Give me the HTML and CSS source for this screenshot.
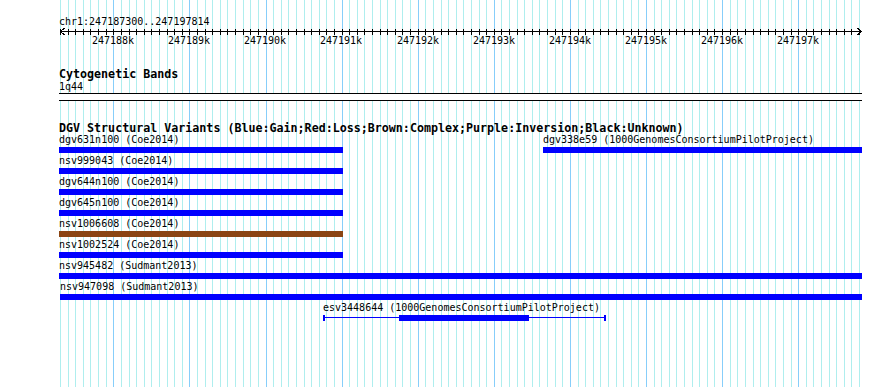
FILE: index.html
```html
<!DOCTYPE html>
<html>
<head>
<meta charset="utf-8">
<title>GBrowse - chr1:247187300..247197814</title>
<link rel="stylesheet" href="styles.css">
</head>
<body>
<div class="canvas">
  <svg class="grid" width="801" height="387" shape-rendering="crispEdges">
    <defs>
      <g id="kb">
        <rect class="grid-major" x="0" width="1" height="387"/>
        <rect class="grid-minor" x="7.61" width="1" height="387"/>
        <rect class="grid-minor" x="15.22" width="1" height="387"/>
        <rect class="grid-minor" x="22.83" width="1" height="387"/>
        <rect class="grid-minor" x="30.44" width="1" height="387"/>
        <rect class="grid-minor" x="38.05" width="1" height="387"/>
        <rect class="grid-minor" x="45.66" width="1" height="387"/>
        <rect class="grid-minor" x="53.27" width="1" height="387"/>
        <rect class="grid-minor" x="60.88" width="1" height="387"/>
        <rect class="grid-minor" x="68.49" width="1" height="387"/>
      </g>
    </defs>
    <use href="#kb" x="-22.8"/>
    <use href="#kb" x="53.3"/>
    <use href="#kb" x="129.4"/>
    <use href="#kb" x="205.5"/>
    <use href="#kb" x="281.6"/>
    <use href="#kb" x="357.7"/>
    <use href="#kb" x="433.8"/>
    <use href="#kb" x="509.9"/>
    <use href="#kb" x="586"/>
    <use href="#kb" x="662.1"/>
    <use href="#kb" x="738.2"/>
  </svg>

  <div class="content">
    <div class="locus">chr1:247187300..247197814</div>

    <div class="ruler">
      <svg class="ruler-art" width="805" height="10" shape-rendering="crispEdges">
        <defs>
          <g id="ticks">
            <rect x="0" y="1" width="1" height="6"/>
            <rect x="7.61" y="1" width="1" height="6"/>
            <rect x="15.22" y="1" width="1" height="6"/>
            <rect x="22.83" y="1" width="1" height="6"/>
            <rect x="30.44" y="1" width="1" height="6"/>
            <rect x="38.05" y="1" width="1" height="6"/>
            <rect x="45.66" y="1" width="1" height="6"/>
            <rect x="53.27" y="1" width="1" height="6"/>
            <rect x="60.88" y="1" width="1" height="6"/>
            <rect x="68.49" y="1" width="1" height="6"/>
          </g>
          <clipPath id="ruler-clip"><rect x="1" y="0" width="801" height="10"/></clipPath>
        </defs>
        <rect class="ink" x="1" y="3" width="802" height="1"/>
        <g class="ink" clip-path="url(#ruler-clip)">
          <use href="#ticks" x="-21.8"/>
          <use href="#ticks" x="54.3"/>
          <use href="#ticks" x="130.4"/>
          <use href="#ticks" x="206.5"/>
          <use href="#ticks" x="282.6"/>
          <use href="#ticks" x="358.7"/>
          <use href="#ticks" x="434.8"/>
          <use href="#ticks" x="510.9"/>
          <use href="#ticks" x="587"/>
          <use href="#ticks" x="663.1"/>
          <use href="#ticks" x="739.2"/>
        </g>
        <path class="arrow" d="M5.5 0 L1.5 3.5 L5.5 7"/>
        <path class="arrow" d="M798.5 0 L802.5 3.5 L798.5 7"/>
      </svg>
      <span class="tick-label" style="left:33px">247188k</span>
      <span class="tick-label" style="left:109px">247189k</span>
      <span class="tick-label" style="left:185px">247190k</span>
      <span class="tick-label" style="left:261px">247191k</span>
      <span class="tick-label" style="left:338px">247192k</span>
      <span class="tick-label" style="left:414px">247193k</span>
      <span class="tick-label" style="left:490px">247194k</span>
      <span class="tick-label" style="left:566px">247195k</span>
      <span class="tick-label" style="left:642px">247196k</span>
      <span class="tick-label" style="left:718px">247197k</span>
    </div>

    <section class="track">
      <div class="track-title">Cytogenetic Bands</div>
      <div class="band-label">1q44</div>
      <div class="band"></div>
    </section>

    <section class="track track-dgv">
      <div class="track-title">DGV Structural Variants (Blue:Gain;Red:Loss;Brown:Complex;Purple:Inversion;Black:Unknown)</div>

      <div class="row">
        <div class="feature" style="margin-left:0;width:284px">
          <div class="feature-label">dgv631n100 (Coe2014)</div>
          <div class="bar gain"></div>
        </div>
        <div class="feature" style="margin-left:200px;width:319px">
          <div class="feature-label">dgv338e59 (1000GenomesConsortiumPilotProject)</div>
          <div class="bar gain"></div>
        </div>
      </div>
      <div class="row">
        <div class="feature" style="margin-left:0;width:284px">
          <div class="feature-label">nsv999043 (Coe2014)</div>
          <div class="bar gain"></div>
        </div>
      </div>
      <div class="row">
        <div class="feature" style="margin-left:0;width:284px">
          <div class="feature-label">dgv644n100 (Coe2014)</div>
          <div class="bar gain"></div>
        </div>
      </div>
      <div class="row">
        <div class="feature" style="margin-left:0;width:284px">
          <div class="feature-label">dgv645n100 (Coe2014)</div>
          <div class="bar gain"></div>
        </div>
      </div>
      <div class="row">
        <div class="feature" style="margin-left:0;width:284px">
          <div class="feature-label">nsv1006608 (Coe2014)</div>
          <div class="bar complex"></div>
        </div>
      </div>
      <div class="row">
        <div class="feature" style="margin-left:0;width:284px">
          <div class="feature-label">nsv1002524 (Coe2014)</div>
          <div class="bar gain"></div>
        </div>
      </div>
      <div class="row">
        <div class="feature" style="margin-left:0;width:803px">
          <div class="feature-label">nsv945482 (Sudmant2013)</div>
          <div class="bar gain"></div>
        </div>
      </div>
      <div class="row">
        <div class="feature" style="margin-left:1px;width:802px">
          <div class="feature-label">nsv947098 (Sudmant2013)</div>
          <div class="bar gain"></div>
        </div>
      </div>
      <div class="row">
        <div class="feature" style="margin-left:264px;width:283px">
          <div class="feature-label">esv3448644 (1000GenomesConsortiumPilotProject)</div>
          <div class="span gain">
            <div class="thin" style="width:74px"></div>
            <div class="thick" style="width:130px"></div>
            <div class="thin grow"></div>
          </div>
        </div>
      </div>
    </section>
  </div>
</div>
</body>
</html>
```

FILE: styles.css
```css
* {
  box-sizing: border-box;
}

html, body {
  margin: 0;
  padding: 0;
  background: #ffffff;
}

body {
  font-family: "DejaVu Sans Mono", "Liberation Mono", monospace;
  font-size: 10px;
  line-height: 13px;
  color: #000000;
}

.canvas {
  position: relative;
  width: 890px;
  height: 387px;
  overflow: hidden;
}

/* background grid */
.grid {
  position: absolute;
  left: 60px;
  top: 0;
}

.grid-minor {
  fill: #afeeee;
}

.grid-major {
  fill: #87cefa;
}

.content {
  position: relative;
  padding-left: 59px;
  padding-top: 15px;
}

.locus {
  height: 13px;
  white-space: nowrap;
}

/* ruler */
.ruler {
  position: relative;
  height: 20px;
}

.ruler-art {
  position: absolute;
  left: 0;
  top: 0;
}

.ink {
  fill: #000000;
}

.arrow {
  fill: none;
  stroke: #000000;
  stroke-width: 1;
}

.tick-label {
  position: absolute;
  top: 6px;
  white-space: nowrap;
}

/* tracks */
.track-title {
  font-weight: bold;
  font-size: 11.67px;
  line-height: 12px;
  white-space: nowrap;
  margin-top: 20px;
}

.band-label {
  height: 13px;
}

.band {
  width: 803px;
  height: 8px;
  border-top: 1px solid #000000;
  border-bottom: 1px solid #000000;
  background: #ffffff;
}

.track-dgv .track-title {
  margin-top: 21px;
  margin-bottom: -1px;
}

.row {
  display: flex;
  height: 21px;
}

.feature {
  display: flex;
  flex-direction: column;
  flex: none;
}

.feature-label {
  height: 13px;
  margin-bottom: 1px;
  white-space: nowrap;
}

.bar {
  height: 6px;
}

.gain {
  background: #0000ff;
}

.complex {
  background: #8b4513;
}

/* feature with whiskers */
.span.gain {
  display: flex;
  height: 6px;
  background: transparent;
  border-left: 2px solid #0000ff;
  border-right: 2px solid #0000ff;
}

.thin {
  flex: none;
  height: 1px;
  margin-top: 2px;
  background: #0000ff;
}

.thin.grow {
  flex: 1;
}

.thick {
  flex: none;
  height: 6px;
  background: #0000ff;
}
```
